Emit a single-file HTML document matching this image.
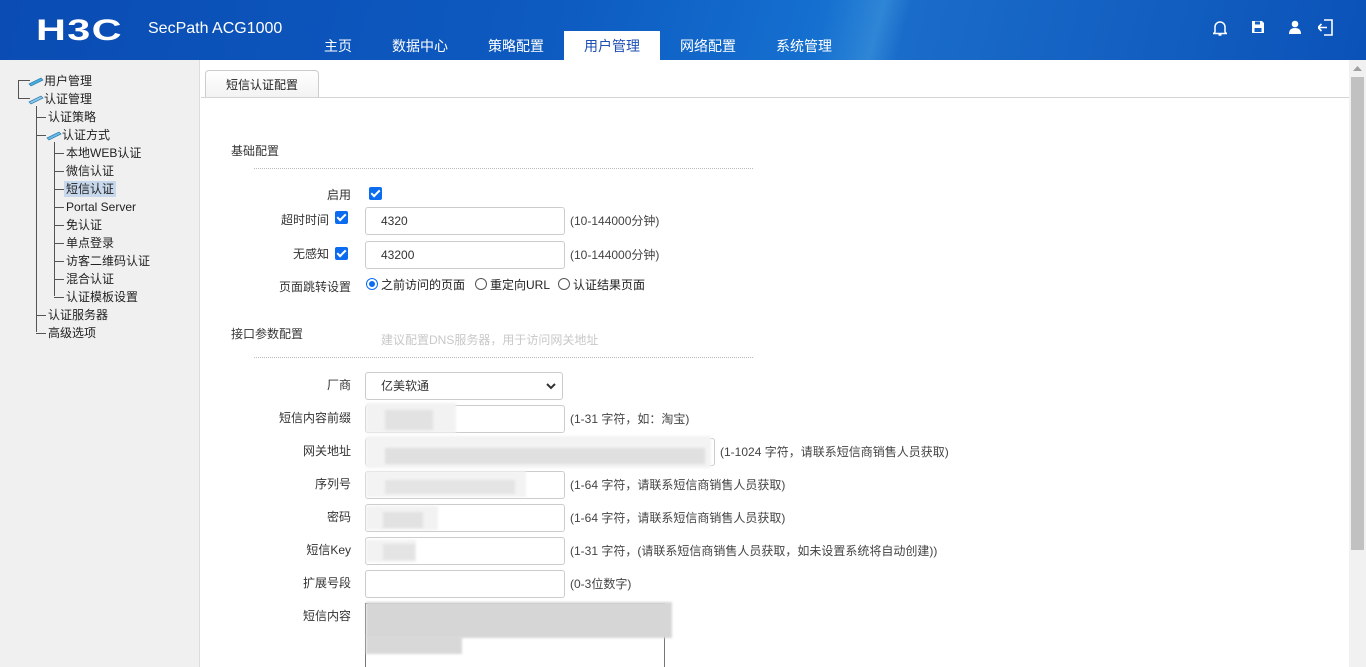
<!DOCTYPE html>
<html><head><meta charset="utf-8"><style>
*{box-sizing:border-box;margin:0;padding:0}
html,body{width:1366px;height:667px;overflow:hidden}
body{font-family:"Liberation Sans","Noto Sans CJK SC",sans-serif;font-size:12px;color:#333;background:#fff;position:relative}
.hdr{position:absolute;left:0;top:0;width:1366px;height:60px;background:linear-gradient(105deg,#0a4cb3 0%,#0d5ac0 40%,#1570d0 60%,#2f86d6 64%,#1a6cca 66%,#0b52b8 100%)}
.logo{position:absolute;left:36px;top:14px;font:bold 30px "Liberation Sans",sans-serif;color:#fff;letter-spacing:1px;transform:scaleX(1.38);transform-origin:left}
.prod{position:absolute;left:148px;top:20px;color:#fff;font-size:16px}
.nav{position:absolute;top:31px;height:29px;line-height:30px;color:#fff;font-size:14px;text-align:center;width:96px}
.nav.act{background:#fff;color:#1d4fb5}
.ic{position:absolute;top:19px}
.side{position:absolute;left:0;top:60px;width:200px;height:607px;background:#f0f0f0;border-right:1px solid #ddd}
.t{position:absolute;font-size:12px;color:#222;line-height:16px;white-space:nowrap}
.ln{position:absolute;background:#555}
.tab{position:absolute;left:205px;top:70px;width:114px;height:28px;border:1px solid #ccc;border-bottom:none;border-radius:4px 4px 0 0;background:linear-gradient(#fff,#f2f2f2);text-align:center;line-height:28px;font-size:12px;color:#222}
.tabline{position:absolute;left:201px;top:97px;width:1148px;height:1px;background:#d4d4d4}
.sb{position:absolute;left:1349px;top:60px;width:17px;height:607px;background:#f1f1f1}
.sb i{position:absolute;left:2px;top:17px;width:13px;height:473px;background:#c1c1c1}
.lbl{position:absolute;right:1015px;font-size:12px;color:#333;white-space:nowrap}
.inp{position:absolute;left:365px;width:200px;height:28px;border:1px solid #ccc;border-radius:3px;padding-left:15px;line-height:26px;font-size:12px;color:#333;background:#fff}
.hint{position:absolute;left:570px;font-size:12px;color:#444;white-space:nowrap}
.cb{position:absolute;width:13px;height:13px;background:#0b6cf0;border-radius:2px}
.cb:after{content:"";position:absolute;left:4px;top:1px;width:3px;height:7px;border:solid #fff;border-width:0 2px 2px 0;transform:rotate(45deg)}
.rd{position:absolute;width:12px;height:12px;border:1px solid #555;border-radius:50%;background:#fff}
.dot{position:absolute;left:254px;width:499px;border-top:1px dotted #bbb}
.blur{position:absolute;background:#ececec;filter:blur(1px)}
</style></head><body>
<div class="hdr">
<div class="logo">H3C</div>
<div class="prod">SecPath ACG1000</div>
<div class="nav" style="left:290px">主页</div>
<div class="nav" style="left:372px">数据中心</div>
<div class="nav" style="left:468px">策略配置</div>
<div class="nav act" style="left:564px">用户管理</div>
<div class="nav" style="left:660px">网络配置</div>
<div class="nav" style="left:756px">系统管理</div>
<svg class="ic" style="left:1213px" width="14" height="18" viewBox="0 0 14 18"><path d="M2 13V8a5 5 0 0 1 10 0v5l1.5 1.5h-13z M5.5 16h3" fill="none" stroke="#fff" stroke-width="1.5"/></svg>
<svg class="ic" style="left:1251px" width="14" height="16" viewBox="0 0 14 16"><path d="M1 2h10l2 2v10H1z" fill="#fff"/><rect x="4" y="2.5" width="5" height="3" fill="#1560c4"/><rect x="3.5" y="9" width="7" height="4" fill="#1560c4"/></svg>
<svg class="ic" style="left:1289px" width="12" height="16" viewBox="0 0 12 16"><circle cx="6" cy="5" r="3.3" fill="#fff"/><path d="M0 15c0-4 2-6 6-6s6 2 6 6z" fill="#fff"/></svg>
<svg class="ic" style="left:1318px" width="16" height="18" viewBox="0 0 16 18"><path d="M6 1h8v15H6 M0 8.5h9 M3.5 5L0 8.5 3.5 12" fill="none" stroke="#fff" stroke-width="1.6"/></svg>
</div>
<div class="side">
<div class="ln" style="left:18px;top:20px;width:1px;height:18px"></div>
<div class="ln" style="left:18px;top:20px;width:12px;height:1px"></div>
<div class="ln" style="left:18px;top:38px;width:12px;height:1px"></div>
<div class="ln" style="left:36px;top:46px;width:1px;height:226px"></div>
<div class="ln" style="left:54px;top:82px;width:1px;height:154px"></div>
</div>
<svg style="position:absolute;left:28px;top:75px" width="16" height="12"><path d="M1 9l12-6 2 2-12 6z" fill="#4ab0e0" stroke="#2a7bb0" stroke-width=".7"/></svg>
<svg style="position:absolute;left:28px;top:93px" width="16" height="12"><path d="M1 9l12-6 2 2-12 6z" fill="#8cc8e8" stroke="#2a7bb0" stroke-width=".7"/></svg>
<svg style="position:absolute;left:46px;top:129px" width="16" height="12"><path d="M1 9l12-6 2 2-12 6z" fill="#6abce8" stroke="#2a7bb0" stroke-width=".7"/></svg>
<div class="t" style="left:44px;top:73px">用户管理</div>
<div class="t" style="left:44px;top:91px">认证管理</div>
<div class="t" style="left:48px;top:109px">认证策略</div>
<div class="t" style="left:62px;top:127px">认证方式</div>
<div class="t" style="left:66px;top:145px">本地WEB认证</div>
<div class="t" style="left:66px;top:163px">微信认证</div>
<div class="t" style="left:64px;top:181px;background:#c8d8ec;padding:0 2px">短信认证</div>
<div class="t" style="left:66px;top:199px">Portal Server</div>
<div class="t" style="left:66px;top:217px">免认证</div>
<div class="t" style="left:66px;top:235px">单点登录</div>
<div class="t" style="left:66px;top:253px">访客二维码认证</div>
<div class="t" style="left:66px;top:271px">混合认证</div>
<div class="t" style="left:66px;top:289px">认证模板设置</div>
<div class="t" style="left:48px;top:307px">认证服务器</div>
<div class="t" style="left:48px;top:325px">高级选项</div>
<div class="ln" style="left:36px;top:117px;width:10px;height:1px"></div>
<div class="ln" style="left:36px;top:135px;width:10px;height:1px"></div>
<div class="ln" style="left:36px;top:315px;width:10px;height:1px"></div>
<div class="ln" style="left:36px;top:333px;width:10px;height:1px"></div>
<div class="ln" style="left:54px;top:153px;width:10px;height:1px"></div>
<div class="ln" style="left:54px;top:171px;width:10px;height:1px"></div>
<div class="ln" style="left:54px;top:189px;width:10px;height:1px"></div>
<div class="ln" style="left:54px;top:207px;width:10px;height:1px"></div>
<div class="ln" style="left:54px;top:225px;width:10px;height:1px"></div>
<div class="ln" style="left:54px;top:243px;width:10px;height:1px"></div>
<div class="ln" style="left:54px;top:261px;width:10px;height:1px"></div>
<div class="ln" style="left:54px;top:279px;width:10px;height:1px"></div>
<div class="ln" style="left:54px;top:297px;width:10px;height:1px"></div>

<div class="tab">短信认证配置</div>
<div class="tabline"></div>
<div class="sb"><svg style="position:absolute;left:4px;top:6px" width="9" height="5"><path d="M0 5L4.5 0 9 5z" fill="#a0a0a0"/></svg><i></i></div>

<div class="t" style="left:231px;top:143px;color:#333">基础配置</div>
<div class="dot" style="top:168px"></div>
<div class="lbl" style="top:186px">启用</div><div class="cb" style="left:369px;top:187px"></div>
<div class="lbl" style="top:211px;right:1037px">超时时间</div><div class="cb" style="left:335px;top:211px"></div>
<div class="inp" style="top:207px">4320</div><div class="hint" style="top:212px">(10-144000分钟)</div>
<div class="lbl" style="top:245px;right:1037px">无感知</div><div class="cb" style="left:335px;top:247px"></div>
<div class="inp" style="top:241px">43200</div><div class="hint" style="top:246px">(10-144000分钟)</div>
<div class="lbl" style="top:278px">页面跳转设置</div>
<div class="rd" style="left:366px;top:278px;border-color:#0b6cf0"><div style="position:absolute;left:2px;top:2px;width:6px;height:6px;border-radius:50%;background:#0b6cf0"></div></div>
<div class="t" style="left:381px;top:277px">之前访问的页面</div>
<div class="rd" style="left:475px;top:278px"></div><div class="t" style="left:490px;top:277px">重定向URL</div>
<div class="rd" style="left:558px;top:278px"></div><div class="t" style="left:573px;top:277px">认证结果页面</div>

<div class="t" style="left:231px;top:326px;color:#333">接口参数配置</div>
<div class="t" style="left:381px;top:332px;color:#c8c8c8">建议配置DNS服务器，用于访问网关地址</div>
<div class="dot" style="top:357px"></div>
<div class="lbl" style="top:376px">厂商</div>
<div class="inp" style="top:372px;width:198px">亿美软通<svg style="position:absolute;right:6px;top:10px" width="10" height="7"><path d="M1 1l4 4 4-4" fill="none" stroke="#333" stroke-width="2"/></svg></div>
<div class="lbl" style="top:409px">短信内容前缀</div><div class="inp" style="top:405px"></div><div class="hint" style="top:410px">(1-31 字符，如：淘宝)</div>
<div class="lbl" style="top:442px">网关地址</div><div class="inp" style="top:438px;width:350px"></div><div class="hint" style="top:443px;left:720px">(1-1024 字符，请联系短信商销售人员获取)</div>
<div class="lbl" style="top:475px">序列号</div><div class="inp" style="top:471px"></div><div class="hint" style="top:476px">(1-64 字符，请联系短信商销售人员获取)</div>
<div class="lbl" style="top:508px">密码</div><div class="inp" style="top:504px"></div><div class="hint" style="top:509px">(1-64 字符，请联系短信商销售人员获取)</div>
<div class="lbl" style="top:541px">短信Key</div><div class="inp" style="top:537px"></div><div class="hint" style="top:542px">(1-31 字符，(请联系短信商销售人员获取，如未设置系统将自动创建))</div>
<div class="lbl" style="top:574px">扩展号段</div><div class="inp" style="top:570px"></div><div class="hint" style="top:575px">(0-3位数字)</div>
<div class="lbl" style="top:607px">短信内容</div>
<div style="position:absolute;left:365px;top:603px;width:300px;height:70px;border:1px solid #777"></div>

<div class="blur" style="left:366px;top:403px;width:90px;height:30px;background:#f2f2f2"></div>
<div class="blur" style="left:385px;top:410px;width:48px;height:20px;background:#e2e2e2"></div>
<div class="blur" style="left:366px;top:436px;width:345px;height:32px;background:#f3f3f3"></div>
<div class="blur" style="left:385px;top:448px;width:320px;height:16px;background:#e0e0e0"></div>
<div class="blur" style="left:366px;top:471px;width:160px;height:26px;background:#f3f3f3"></div>
<div class="blur" style="left:385px;top:480px;width:130px;height:14px;background:#e4e4e4"></div>
<div class="blur" style="left:366px;top:506px;width:72px;height:24px;background:#f2f2f2"></div>
<div class="blur" style="left:383px;top:512px;width:40px;height:16px;background:#e2e2e2"></div>
<div class="blur" style="left:366px;top:540px;width:50px;height:22px;background:#f2f2f2"></div>
<div class="blur" style="left:383px;top:544px;width:32px;height:16px;background:#e4e4e4"></div>
<div class="blur" style="left:366px;top:602px;width:306px;height:36px;background:#d6d6d6"></div>
<div class="blur" style="left:366px;top:636px;width:96px;height:18px;background:#d8d8d8"></div>
</body></html>
